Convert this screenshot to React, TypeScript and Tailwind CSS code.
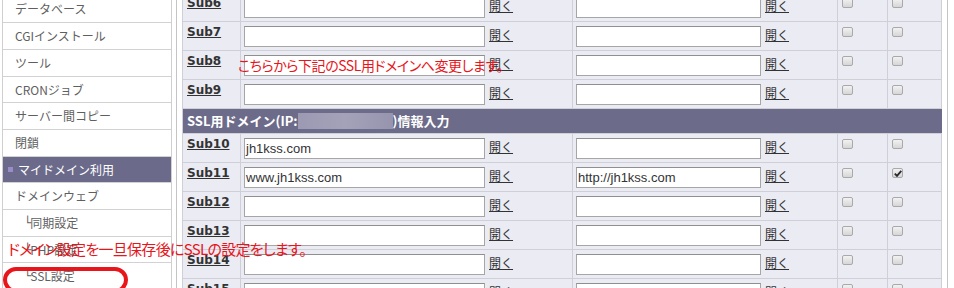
import React from 'react';

const menu = [
  'データベース',
  'CGIインストール',
  'ツール',
  'CRONジョブ',
  'サーバー間コピー',
  '閉鎖',
  'マイドメイン利用',
  'ドメインウェブ',
  '└同期設定',
  '└PHP設定',
  '└SSL設定',
];

type Row = { name: string; host?: string; url?: string; checked?: boolean };

const upperRows: Row[] = [{ name: 'Sub6' }, { name: 'Sub7' }, { name: 'Sub8' }, { name: 'Sub9' }];

const lowerRows: Row[] = [
  { name: 'Sub10', host: 'jh1kss.com' },
  { name: 'Sub11', host: 'www.jh1kss.com', url: 'http://jh1kss.com', checked: true },
  { name: 'Sub12' },
  { name: 'Sub13' },
  { name: 'Sub14' },
  { name: 'Sub15' },
];

function Checkbox({ checked }: { checked?: boolean }) {
  return (
    <div className="mt-[5px] ml-[4px] w-[11px] h-[10px] rounded-[2px] border border-[#a9a9a9] bg-gradient-to-b from-[#f2f2f2] to-[#d6d6d6] flex items-center justify-center">
      {checked && (
        <svg width="8" height="7" viewBox="0 0 8 7">
          <path d="M0.8 3.6 L3 5.9 L7.3 0.8" fill="none" stroke="#2a2a2a" strokeWidth="1.8" />
        </svg>
      )}
    </div>
  );
}

function OpenLink() {
  return (
    <span className="ml-[4px] mt-[6px] text-[12px] leading-[14px] text-[#333] underline font-['Noto_Sans_CJK_JP',sans-serif]">
      開く
    </span>
  );
}

function TextBox({ value, width }: { value?: string; width: string }) {
  return (
    <div
      className={`${width} mt-[4px] h-[21px] border border-[#a6a6a6] border-t-[#8f8f8f] bg-white px-[1px] text-[13px] leading-[19px] text-[#333] font-['Liberation_Sans',sans-serif] whitespace-nowrap overflow-hidden`}
    >
      {value}
    </div>
  );
}

function SubRow({ row }: { row: Row }) {
  return (
    <div className="grid grid-cols-[58px_332px_265px_50px_54px] h-[29px] border-b border-[#cfcfd8] bg-[#ebebf4]">
      <div className="border-r border-[#cfcfd8] pl-[4px] pt-[3px] text-[12px] leading-[14px] font-bold text-[#333] font-['DejaVu_Sans',sans-serif]">
        <span className="underline">{row.name}</span>
      </div>
      <div className="border-r border-[#cfcfd8] pl-[3px] flex items-start">
        <TextBox value={row.host} width="w-[241px]" />
        <OpenLink />
      </div>
      <div className="border-r border-[#cfcfd8] pl-[3px] flex items-start">
        <TextBox value={row.url} width="w-[185px]" />
        <OpenLink />
      </div>
      <div className="border-r border-[#cfcfd8]">
        <Checkbox />
      </div>
      <div className="border-r border-[#cfcfd8]">
        <Checkbox checked={row.checked} />
      </div>
    </div>
  );
}

export default function App() {
  return (
    <div className="relative w-[954px] h-[288px] overflow-hidden bg-white flex font-['Noto_Sans_CJK_JP',sans-serif]">
      {/* side menu */}
      <div className="ml-[2px] w-[170px] border-l border-r border-[#cfcfcf] -mt-[3.4px] shrink-0">
        {menu.map((m) => {
          const active = m === 'マイドメイン利用';
          const sub = m.startsWith('└');
          return (
            <div
              key={m}
              className={`h-[26.7px] border-b border-[#d2d2d2] flex items-center text-[12px] whitespace-nowrap ${
                active ? 'bg-[#6b6a8a] text-white pl-[5px]' : sub ? 'text-[#5f5f5f] pl-[21px]' : 'text-[#5f5f5f] pl-[12px]'
              }`}
            >
              {active && <span className="w-[5px] h-[5px] bg-[#9a8cc8] mr-[5px]" />}
              {sub ? (
                <>
                  <span className="font-['DejaVu_Sans',sans-serif] text-[12px] -mr-[1px]">└</span>
                  {m.slice(1)}
                </>
              ) : (
                m
              )}
            </div>
          );
        })}
      </div>

      {/* main table */}
      <div className="ml-[4px] w-[772px] border-l border-r border-[#c4c4c4] pl-[5px] shrink-0">
        <div className="w-[760px] border-l border-[#cfcfd8] -mt-[7px]">
          {upperRows.map((r) => (
            <SubRow key={r.name} row={r} />
          ))}
          <div className="h-[25px] bg-[#6c6b8a] border-b border-[#cfcfd8] flex items-center pl-[4px] text-[13px] font-bold text-white">
            SSL用ドメイン(IP:
            <span className="inline-block w-[95px] h-[16px] bg-gradient-to-r from-[#9c9ab2] via-[#a4a2b9] to-[#9795ae]" />
            )情報入力
          </div>
          {lowerRows.map((r) => (
            <SubRow key={r.name} row={r} />
          ))}
        </div>
      </div>

      {/* red annotations */}
      <div className="absolute left-[238px] top-[55px] text-[14px] leading-[20px] tracking-[-0.45px] text-[#e8151b] whitespace-nowrap [font-feature-settings:'palt']">
        こちらから下記のSSL用ドメインへ変更します。
      </div>
      <div className="absolute left-[8px] top-[239px] text-[15px] leading-[20px] tracking-[-0.7px] text-[#e8151b] whitespace-nowrap [font-feature-settings:'palt']">
        ドメイン設定を一旦保存後にSSLの設定をします。
      </div>
      <div className="absolute left-[3px] top-[267px] w-[125px] h-[26px] rounded-full border-4 border-[#e8151b]" />
    </div>
  );
}
